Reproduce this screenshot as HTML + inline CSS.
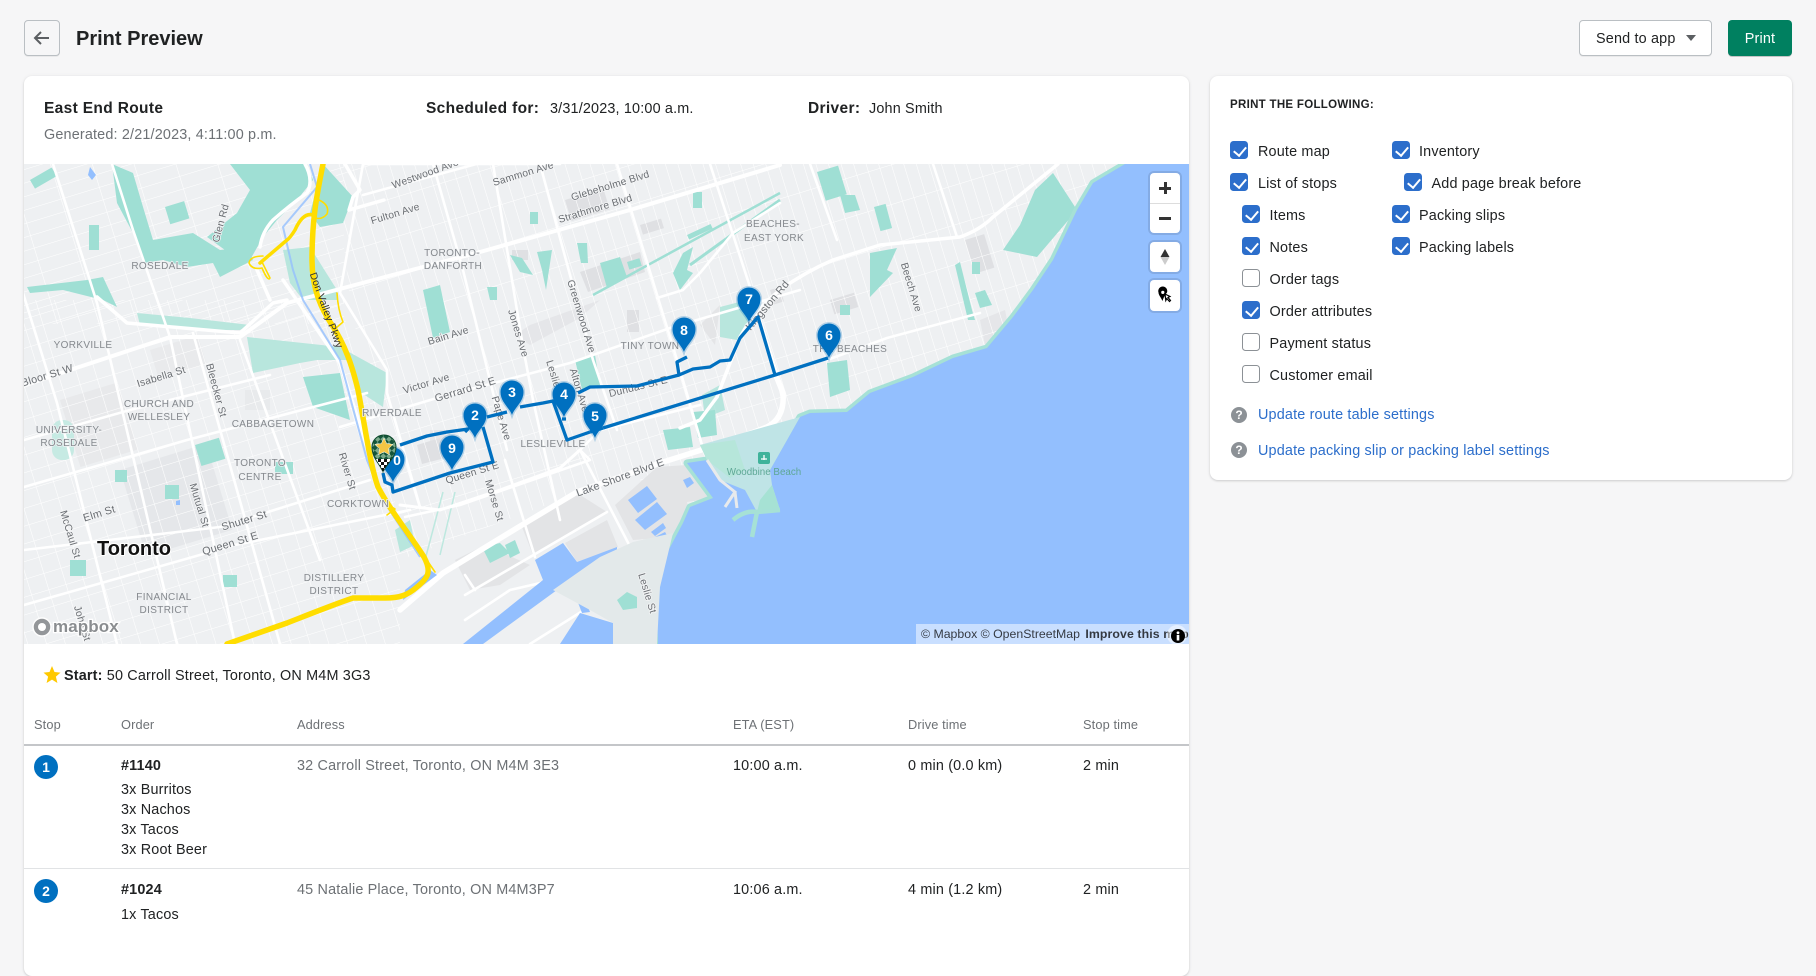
<!DOCTYPE html>
<html><head><meta charset="utf-8"><title>Print Preview</title>
<style>
*{box-sizing:border-box}
html,body{margin:0;padding:0;width:1816px;height:933px;overflow:hidden;background:#f6f6f7;font-family:"Liberation Sans",sans-serif;color:#202223}
.a{position:absolute;white-space:nowrap;line-height:20px;font-size:14.4px;letter-spacing:.17px}
.card{position:absolute;background:#fff;border-radius:8px;box-shadow:0 0 5px rgba(23,24,24,.05),0 1px 2px rgba(0,0,0,.15)}
.btn{position:absolute;border-radius:4px;background:#fff;border:1px solid #babfc3;box-shadow:0 1px 0 rgba(0,0,0,.05)}
.cb{position:absolute;width:18px;height:18px;border-radius:3.5px;background:#2c6ecb}
.cb:after{content:"";position:absolute;left:6px;top:3px;width:6px;height:10px;border:solid #fff;border-width:0 2px 2px 0;transform:rotate(40deg)}
.cb.o{background:#fff;border:1.6px solid #8c9196}
.cb.o:after{display:none}
.b{font-weight:bold}
.h{font-weight:bold;font-size:15.5px;letter-spacing:.34px}
.g{color:#6d7175}
.th{font-size:12.8px;color:#6d7175;letter-spacing:.12px}
.link{color:#2c6ecb}
.q{position:absolute;width:16px;height:16px;border-radius:50%;background:#8c9196;color:#fff;font:bold 12px/16px "Liberation Sans",sans-serif;text-align:center}
.badge{position:absolute;width:24px;height:24px;border-radius:50%;background:#0070c0;color:#fff;font:bold 14px/24px "Liberation Sans",sans-serif;text-align:center}
#map{position:absolute;left:24px;top:164px;width:1165px;height:480px;overflow:hidden}
.ctl{position:absolute;background:#fff;border-radius:4px;box-shadow:0 0 0 2px rgba(0,0,0,.1)}
svg text{font-family:"Liberation Sans",sans-serif}
.hood{font-size:10px;fill:#85898e;letter-spacing:.35px;text-anchor:middle;paint-order:stroke;stroke:#eef0f2;stroke-width:1.5px}
.rd{font-size:10.3px;fill:#6a6e73;text-anchor:middle;letter-spacing:.2px;paint-order:stroke;stroke:#f4f5f6;stroke-width:1.5px}
.rl{font-size:10.8px}
.pn{font-size:14px;font-weight:bold;fill:#fff;text-anchor:middle}
</style></head><body>

<div class="btn" style="left:24px;top:20px;width:36px;height:36px;background:#f6f6f7"></div>
<svg style="position:absolute;left:24px;top:20px" width="36" height="36" viewBox="0 0 36 36"><path d="M25 18H11M17 12l-6 6 6 6" fill="none" stroke="#5c5f62" stroke-width="2"/></svg>
<div class="a b" style="left:76px;top:27px;font-size:20px;line-height:24px;letter-spacing:0">Print Preview</div>

<div class="btn" style="left:1579px;top:20px;width:133px;height:36px"></div>
<div class="a" style="left:1596px;top:29px">Send to app</div>
<svg style="position:absolute;left:1685px;top:34px" width="12" height="8"><path d="M1 1h10L6 7z" fill="#5c5f62"/></svg>
<div style="position:absolute;left:1728px;top:20px;width:64px;height:36px;border-radius:4px;background:#008060;box-shadow:0 1px 0 rgba(0,0,0,.2)"></div>
<div class="a" style="left:1728px;top:29px;width:64px;text-align:center;color:#fff">Print</div>

<div class="card" style="left:24px;top:76px;width:1165px;height:900px"></div>
<div class="a h" style="left:44px;top:99px">East End Route</div>
<div class="a g" style="left:44px;top:125px">Generated: 2/21/2023, 4:11:00 p.m.</div>
<div class="a h" style="left:426px;top:99px">Scheduled for:</div>
<div class="a" style="left:550px;top:99px">3/31/2023, 10:00 a.m.</div>
<div class="a h" style="left:808px;top:99px">Driver:</div>
<div class="a" style="left:869px;top:99px">John Smith</div>

<div id="map">
<svg width="1165" height="480" viewBox="24 164 1165 480" xmlns="http://www.w3.org/2000/svg">
<defs>
<pattern id="pE" width="12" height="38" patternUnits="userSpaceOnUse" patternTransform="rotate(-17 0 0)"><path d="M0 0V38M0 0H12" stroke="#fff" stroke-width="1.1" fill="none"/></pattern>
<pattern id="pW" width="40" height="13" patternUnits="userSpaceOnUse" patternTransform="rotate(-17 0 0)"><path d="M0 0V13M0 0H40" stroke="#fff" stroke-width="1.1" fill="none"/></pattern>
<pattern id="pD" width="18" height="17" patternUnits="userSpaceOnUse" patternTransform="rotate(-17 0 0)"><path d="M0 0V17M0 0H18" stroke="#fff" stroke-width="1.1" fill="none"/></pattern>
<pattern id="chk" width="8" height="8" patternUnits="userSpaceOnUse" patternTransform="rotate(45 384 447)"><rect width="8" height="8" fill="#15553a"/><rect width="4" height="4" fill="#7aa98a"/><rect x="4" y="4" width="4" height="4" fill="#7aa98a"/></pattern>
<pattern id="chk2" width="6" height="6" patternUnits="userSpaceOnUse"><rect width="6" height="6" fill="#111"/><rect width="3" height="3" fill="#fff"/><rect x="3" y="3" width="3" height="3" fill="#fff"/></pattern>
<path id="pin" d="M0 0C-3-8-11.500-13-11.500-23A11.500 11.500 0 1 1 11.500-23C11.500-13 3-8 0 0Z"/>
</defs>
<rect x="24" y="164" width="1165" height="480" fill="#eef0f2"/>

<!-- gray blocks under the street grid -->
<g fill="#dfe0e3">
<polygon points="580,272 640,252 645,272 588,292"/>
<rect x="512" y="250" width="16" height="10"/>
<polygon points="515,335 530,325 600,300 580,318 530,345" opacity=".6"/>
<rect x="627" y="310" width="12" height="22"/>
<polygon points="417,445 440,438 445,458 422,464"/>
<polygon points="700,325 720,305 715,345" opacity=".7"/>
<rect x="120" y="470" width="90" height="90" transform="rotate(-17 120 470)" opacity=".55"/>
<rect x="60" y="400" width="60" height="70" transform="rotate(-17 60 400)" opacity=".45"/>
<rect x="150" y="350" width="50" height="30" transform="rotate(-17 150 350)" opacity=".35"/>
<rect x="245" y="390" width="25" height="20" opacity=".4"/>
<rect x="965" y="240" width="20" height="35" transform="rotate(-17 965 240)"/>
<rect x="830" y="300" width="25" height="15" transform="rotate(-17 830 300)"/>
<polygon points="980,320 1005,310 1010,335 985,345" opacity=".6"/>
<rect x="430" y="430" width="20" height="14" opacity=".6"/>
<rect x="565" y="200" width="40" height="22" transform="rotate(-17 565 200)"/>
<rect x="640" y="225" width="22" height="10" transform="rotate(-17 640 225)"/>
<rect x="770" y="290" width="10" height="15" transform="rotate(-17 770 290)"/>
</g>

<!-- street grids -->
<rect x="24" y="164" width="320" height="160" fill="url(#pW)"/>
<polygon points="24,300 340,300 400,520 400,644 24,644" fill="url(#pD)"/>
<polygon points="335,164 1189,164 1189,644 640,644 640,470 400,560 350,300" fill="url(#pE)"/>

<!-- port lands (no grid) -->
<g fill="#e3e4e6">
<polygon points="522,527 577,493 607,512 533,555"/>
<polygon points="565,543 607,520 618,547 577,562"/>
<polygon points="615,505 657,467 687,465 715,498 687,502 690,517 673,537 633,540"/>
<polygon points="455,560 485,545 530,565 500,585 470,590"/>
</g>

<!-- parks -->
<g fill="#9fdfd4">
<polygon points="112,164 133,173 143,207 153,240 193,233 220,250 247,247 253,260 220,277 213,263 187,267 163,260 143,263 133,233 117,203"/>
<polygon points="230,164 307,164 313,180 297,200 277,220 263,237 250,260 225,250 207,237 237,213 250,190"/>
<polygon points="323,164 353,197 343,223 320,227 310,213"/>
<polygon points="27,287 87,280 103,277 117,307 103,300 63,290 30,293"/>
<polygon points="303,377 340,373 350,420 313,407"/>
<polygon points="683,253 693,247 687,270 693,273 680,290 673,273"/>
<polygon points="1053,173 1077,210 1037,257 1003,250 1020,225 1035,190"/>
<polygon points="870,253 897,248 887,270 893,273 870,297"/>
<polygon points="827,363 847,360 850,390 830,397"/>
<polygon points="600,263 620,257 627,277 607,288"/>
<rect x="165" y="207" width="20" height="18" transform="rotate(-17 165 207)"/>
<rect x="89" y="225" width="10" height="25"/>
<rect x="30" y="180" width="25" height="10" transform="rotate(-30 30 180)"/>
<rect x="195" y="445" width="25" height="22" transform="rotate(-17 195 445)"/>
<rect x="275" y="462" width="18" height="12"/>
<rect x="165" y="485" width="14" height="14"/>
<rect x="115" y="470" width="12" height="12"/>
<rect x="70" y="560" width="16" height="16"/>
<rect x="223" y="575" width="14" height="12"/>
<rect x="840" y="305" width="10" height="10"/>
<rect x="817" y="172" width="22" height="30" transform="rotate(-17 817 172)"/>
<rect x="874" y="207" width="12" height="25" transform="rotate(-15 874 207)"/>
<rect x="972" y="262" width="8" height="12"/>
<rect x="627" y="262" width="13" height="8" transform="rotate(-17 627 262)"/>
<rect x="693" y="192" width="9" height="16"/>
<rect x="687" y="235" width="26" height="5" transform="rotate(-25 687 235)"/>
<polygon points="537,252 552,250 546,290 542,270"/>
<polygon points="510,255 522,258 533,275 520,272"/>
<polygon points="423,290 440,285 450,332 433,338"/>
<polygon points="577,243 587,243 588,263 581,263"/>
<polygon points="487,287 497,287 497,300 490,300"/>
<rect x="530" y="212" width="8" height="12"/>
<polygon points="575,360 595,355 600,385 582,390"/>
<polygon points="663,430 690,427 693,447 668,450"/>
<polygon points="693,412 715,410 717,435 698,438"/>
<polygon points="702,395 720,385 725,410 705,418" opacity=".7"/>
<polygon points="482,547 500,543 510,553 490,563"/>
<polygon points="505,545 515,540 520,553 510,558"/>
<polygon points="975,293 985,290 992,305 980,308"/>
<polygon points="955,265 960,262 972,310 975,320 968,320"/>
<polygon points="840,195 855,195 860,210 845,213"/>
</g>
<g fill="#b8e6dd">
<polygon points="720,307 747,300 757,320 737,340 720,337"/>
<polygon points="283,250 310,247 337,290 337,300 303,300 290,283"/>
<polygon points="247,337 340,347 387,373 383,407 357,390 347,360 317,360 300,363 253,373"/>
<polygon points="137,313 190,318 250,325 240,330 190,330 140,325"/>
<polygon points="395,530 410,520 415,545 400,552"/>
<rect x="52" y="420" width="22" height="40" rx="10" fill="#c6eae3"/>
</g>
<path d="M593 295L780 193" stroke="#9fdfd4" stroke-width="2.500"/>
<path d="M690 265L780 200" stroke="#9fdfd4" stroke-width="3"/>
<path d="M443 492L425 560M455 492L440 555" stroke="#bde8df" stroke-width="1.500" fill="none"/>

<!-- minor feature paths -->
<g fill="none" stroke="#fff" stroke-width="2.600" stroke-linecap="round" stroke-linejoin="round">
<path d="M53 164L97 303L177 644"/>
<path d="M23 293L57 403L117 644"/>
<path d="M112 164L133 230L170 337L235 644"/>
<path d="M193 333L280 644"/>
<path d="M240 340L320 560"/>
<path d="M24 487L187 440L367 393"/>
<path d="M24 550L220 527L370 480"/>
<path d="M24 605L235 545L410 510"/>
<path d="M24 440L130 410L270 375"/>
<path d="M363 164L340 293L387 370L387 393L420 507"/>
<path d="M433 164L463 270L507 450"/>
<path d="M493 164L523 347L533 400L560 520"/>
<path d="M540 164L593 360L617 430"/>
<path d="M617 164L677 360L702 445"/>
<path d="M710 164L750 287L777 373L783 403"/>
<path d="M810 164L837 240"/>
<path d="M933 164L957 237"/>
<path d="M340 427L437 398L570 363L673 327L800 290"/>
<path d="M657 298L683 290L700 273L733 233L780 203"/>
<path d="M405 517L460 505L590 460L580 450L600 430L700 405"/>
<path d="M827 360L887 338L980 313"/>
<path d="M365 164L560 164"/>
<path d="M363 195L480 163"/>
<path d="M580 450L637 560L653 607"/>
<path d="M505 460L535 557"/>
<path d="M465 595L607 512"/>
<path d="M465 620L510 590L640 560"/>
<path d="M640 560L590 585L600 600L530 644"/>
<path d="M465 575L475 590"/>
</g>
<!-- big roads -->
<g fill="none" stroke="#fff" stroke-linecap="round" stroke-linejoin="round">
<path stroke-width="4" d="M20 387L70 370L170 337L240 337L287 303L423 267L480 252L630 210L780 165"/>
<path stroke-width="3.500" d="M97 297L127 323L240 333L273 303L287 300"/>
<path stroke-width="3.500" d="M260 247Q262 232 273 220Q290 205 307 193Q314 180 305 164"/>
<path stroke-width="3.500" d="M257 270L270 300"/>
<path stroke-width="3.500" d="M283 280L340 363L367 447"/>
<path stroke-width="3.500" d="M345 164L360 190L353 197L349 210L384 200"/>
<path stroke-width="3.500" d="M717 397L740 337Q755 310 780 290Q805 272 833 260L880 245L960 237Q980 230 993 217L1058 164"/>
<path stroke-width="3.500" d="M717 397L700 420L680 428"/>
<path stroke-width="5.500" d="M400 610L443 573L517 528L577 492L660 463L733 440L767 427Q785 418 783 393L775 373"/>
<path stroke-width="3" d="M400 505L440 510L500 490L560 468L580 450"/>
</g>

<!-- water -->
<polygon points="1125,164 1093,183 1077,210 1053,260 1033,290 1013,317 987,348 953,358 913,377 870,393 847,412 810,413 800,417 787,440 770,470 745,489 738,484 720,478 707,460 687,463 713,498 690,507 683,523 667,553 660,587 657,610 658,644 1189,644 1189,164" fill="#93bffe" stroke="#a6e1d6" stroke-width="7" stroke-linejoin="round" paint-order="stroke"/>
<g fill="#93bffe">
<polygon points="463,644 543,580 535,560 563,543 577,562 617,547 617,555 557,590 483,644"/>
<polygon points="560,644 580,613 613,623 613,644"/>
<polygon points="628,500 647,486 657,499 638,513"/>
<polygon points="635,520 657,502 667,514 645,530"/>
<polygon points="651,532 663,523 666,528 655,536"/>
<polygon points="655,537 665,532 668,537 659,543"/>
<polygon points="683,480 690,477 694,483 687,488"/>
<polygon points="577,600 584,597 590,612 582,613"/>
<polygon points="403,600 437,575 430,570 405,590"/>
<polygon points="176,501 180,500 180,505 176,505"/>
<polygon points="90,167 96,175 92,180 88,175"/>
</g>
<!-- spit and beach -->
<polygon points="633,542 673,533 660,587 657,644 613,644 613,623 590,610 553,590 600,557" fill="#e3e9ea"/>
<polygon points="617,600 627,592 637,597 637,608 623,610" fill="#9fdfd4"/>
<polygon points="700,445 800,417 787,440 770,470 772,485 780,510 757,512 745,490 720,480 707,460" fill="#bfe4e6"/>
<polygon points="700,445 735,440 745,470 730,478 707,460" fill="#b6e6da"/>
<polygon points="760,500 772,485 780,510 757,512" fill="#a6e2d4"/>
<path d="M733 520Q745 510 757 512L780 510M757 512L752 537" fill="none" stroke="#a6e1d6" stroke-width="4.500" stroke-linejoin="round"/>
<path d="M707 460L720 480L735 492L725 507M735 492L737 508" fill="none" stroke="#e8eaec" stroke-width="3"/>
<rect x="758" y="452" width="12" height="12" rx="2" fill="#3fb39b"/>
<path d="M761 459h6M764 455v5" stroke="#fff" stroke-width="1.300"/>

<!-- don river -->
<path d="M310 164L317 187L283 227L293 270L303 300L340 360L367 460L383 500L420 557" fill="none" stroke="#93bffe" stroke-width="2" opacity=".8"/>

<!-- highway -->
<g fill="none" stroke="#ffdd00" stroke-linecap="round" stroke-linejoin="round">
<path stroke-width="5.500" d="M323 164C318 190 312 215 312 260C312 290 322 310 332 325C345 345 352 365 358 390C364 420 370 465 378 487C390 510 410 535 424 557C432 572 428 578 417 587C408 595 400 598 385 598L353 598C335 604 310 614 287 623L227 644"/>
<path stroke-width="3.500" d="M313 215Q303 212 295 230Q290 238 287 240L260 263"/>
<path stroke-width="1.600" d="M319 200Q330 205 327 214Q322 220 315 218M263 256Q250 256 249 263Q252 270 262 268M262 268Q268 282 270 278L262 262M337 293Q338 310 343 322L336 328M420 550L435 572M389 505L395 509L387 515"/>
</g>

<!-- labels -->
<g>
<text class="hood" x="160" y="269">ROSEDALE</text>
<text class="hood" x="83" y="348">YORKVILLE</text>
<text class="hood" x="159" y="407">CHURCH AND</text>
<text class="hood" x="159" y="420">WELLESLEY</text>
<text class="hood" x="273" y="427">CABBAGETOWN</text>
<text class="hood" x="69" y="433">UNIVERSITY-</text>
<text class="hood" x="69" y="446">ROSEDALE</text>
<text class="hood" x="260" y="466">TORONTO</text>
<text class="hood" x="260" y="480">CENTRE</text>
<text class="hood" x="392" y="416">RIVERDALE</text>
<text class="hood" x="452" y="256">TORONTO-</text>
<text class="hood" x="453" y="269">DANFORTH</text>
<text class="hood" x="358" y="507">CORKTOWN</text>
<text class="hood" x="334" y="581">DISTILLERY</text>
<text class="hood" x="334" y="594">DISTRICT</text>
<text class="hood" x="164" y="600">FINANCIAL</text>
<text class="hood" x="164" y="613">DISTRICT</text>
<text class="hood" x="773" y="227">BEACHES-</text>
<text class="hood" x="774" y="241">EAST YORK</text>
<text class="hood" x="650" y="349">TINY TOWN</text>
<text class="hood" x="553" y="447">LESLIEVILLE</text>
<text class="hood" x="850" y="352">THE BEACHES</text>
<text x="134" y="555" style="font-size:20px;font-weight:bold;fill:#111;text-anchor:middle;paint-order:stroke;stroke:#fff;stroke-width:2px">Toronto</text>
<text class="rd" transform="translate(220 223) rotate(-75)" y="4">Glen Rd</text>
<text class="rd" transform="translate(327 310) rotate(70)" y="4" style="fill:#333;stroke-width:0">Don Valley Pkwy</text>
<text class="rd" transform="translate(395 213) rotate(-17)" y="4">Fulton Ave</text>
<text class="rd" transform="translate(425 173) rotate(-20)" y="4">Westwood Ave</text>
<text class="rd" transform="translate(448 335) rotate(-17)" y="4">Bain Ave</text>
<text class="rd" transform="translate(426 383) rotate(-17)" y="4">Victor Ave</text>
<text class="rd rl" transform="translate(465 389) rotate(-17)" y="4">Gerrard St E</text>
<text class="rd rl" transform="translate(47 375) rotate(-17)" y="4">Bloor St W</text>
<text class="rd" transform="translate(161 376) rotate(-17)" y="4">Isabella St</text>
<text class="rd" transform="translate(217 390) rotate(75)" y="4">Bleecker St</text>
<text class="rd" transform="translate(200 505) rotate(73)" y="4">Mutual St</text>
<text class="rd" transform="translate(348 471) rotate(73)" y="4">River St</text>
<text class="rd" transform="translate(71 534) rotate(73)" y="4">McCaul St</text>
<text class="rd rl" transform="translate(99 513) rotate(-17)" y="4">Elm St</text>
<text class="rd rl" transform="translate(244 520) rotate(-17)" y="4">Shuter St</text>
<text class="rd rl" transform="translate(230 543) rotate(-17)" y="4">Queen St E</text>
<text class="rd" transform="translate(83 623) rotate(73)" y="4">John St</text>
<text class="rd" transform="translate(519 333) rotate(73)" y="4">Jones Ave</text>
<text class="rd" transform="translate(582 316) rotate(73)" y="4">Greenwood Ave</text>
<text class="rd" transform="translate(502 418) rotate(73)" y="4">Pape Ave</text>
<text class="rd" transform="translate(580 390) rotate(73)" y="4">Alton Ave</text>
<text class="rd" transform="translate(556 380) rotate(73)" y="4">Leslie St</text>
<text class="rd" transform="translate(638 386) rotate(-14)" y="4">Dundas St E</text>
<text class="rd rl" transform="translate(767 305) rotate(-50)" y="4">Kingston Rd</text>
<text class="rd" transform="translate(472 472) rotate(-17)" y="4">Queen St E</text>
<text class="rd" transform="translate(495 500) rotate(73)" y="4">Morse St</text>
<text class="rd rl" transform="translate(620 477) rotate(-20)" y="4">Lake Shore Blvd E</text>
<text class="rd" transform="translate(523 173) rotate(-17)" y="4">Sammon Ave</text>
<text class="rd" transform="translate(610 185) rotate(-17)" y="4">Glebeholme Blvd</text>
<text class="rd" transform="translate(595 208) rotate(-17)" y="4">Strathmore Blvd</text>
<text class="rd" transform="translate(912 287) rotate(73)" y="4">Beech Ave</text>
<text class="rd" transform="translate(648 593) rotate(73)" y="4">Leslie St</text>
<text x="764" y="475" style="font-size:9.8px;fill:#5da795;text-anchor:middle">Woodbine Beach</text>
</g>

<!-- mapbox logo -->
<circle cx="42" cy="627" r="9" fill="#8a8d90" stroke="#fff" stroke-width="1.500" opacity=".9"/>
<circle cx="42" cy="627" r="4" fill="#fff"/>
<text x="53" y="632" style="font-size:17px;font-weight:bold;fill:#8a8d90;paint-order:stroke;stroke:#fff;stroke-width:2.500px;letter-spacing:.1px">mapbox</text>

<!-- route -->
<g fill="none" stroke="#0070c0" stroke-width="3.300" stroke-linejoin="round">
<path d="M400 445L427 436L447 432L468 429L465 432"/>
<path d="M483 427L493 462L450 473L393 492L392 485L385 482L383 473"/>
<path d="M487 417L507 412M520 407L543 403L553 401L567 440L590 432M603 428L775 375L828 358"/>
<path d="M775 375L758 317L740 338L730 360L720 361L710 367L693 369L679 375L677 362L687 357"/>
<path d="M679 375L637 386L590 387L578 393"/>
<path d="M562 419H566M590 432L603 428"/>
</g>

<!-- pins -->
<g fill="#0070c0" stroke="rgba(0,112,192,.25)" stroke-width="3" paint-order="stroke">
<use href="#pin" x="393" y="482"/>
<use href="#pin" x="475" y="438"/>
<use href="#pin" x="512" y="415"/>
<use href="#pin" x="564" y="417"/>
<use href="#pin" x="595" y="438"/>
<use href="#pin" x="829" y="358"/>
<use href="#pin" x="749" y="322"/>
<use href="#pin" x="684" y="352"/>
<use href="#pin" x="452" y="470"/>
</g>
<text class="pn" x="397" y="465">0</text>
<text class="pn" x="475" y="420">2</text>
<text class="pn" x="512" y="397">3</text>
<text class="pn" x="564" y="399">4</text>
<text class="pn" x="595" y="421">5</text>
<text class="pn" x="829" y="340">6</text>
<text class="pn" x="749" y="304">7</text>
<text class="pn" x="684" y="335">8</text>
<text class="pn" x="452" y="453">9</text>

<!-- start marker -->
<path d="M383 472C380 464 372 458 372 447A12 12 0 1 1 396 447C396 458 386 464 383 472Z" fill="url(#chk)" stroke="#0e4a2c" stroke-width="1"/>
<path d="M383 472C381 466 378 463 376 459H391C389 463 385 466 383 472Z" fill="url(#chk2)"/>
<path d="M384 438l2.700 5.600 6.200.8-4.500 4.300 1.100 6.100-5.500-3-5.500 3 1.100-6.100-4.500-4.300 6.200-.8z" fill="#f5c644" stroke="#fff" stroke-width=".5"/>
</svg>

<!-- controls -->
<div class="ctl" style="left:1126px;top:9px;width:30px;height:60px"></div>
<div style="position:absolute;left:1126px;top:39px;width:30px;height:1px;background:#ddd"></div>
<div style="position:absolute;left:1135px;top:22.500px;width:12px;height:3px;background:#333"></div>
<div style="position:absolute;left:1139.500px;top:18px;width:3px;height:12px;background:#333"></div>
<div style="position:absolute;left:1135px;top:52.500px;width:12px;height:3px;background:#333"></div>
<div class="ctl" style="left:1126px;top:78px;width:30px;height:30px"></div>
<svg style="position:absolute;left:1126px;top:78px" width="30" height="30"><path d="M15 7l4.500 8h-9z" fill="#333"/><path d="M15 23l4.500-8h-9z" fill="#ccc"/></svg>
<div class="ctl" style="left:1126px;top:116px;width:30px;height:31px"></div>
<svg style="position:absolute;left:1126px;top:116px" width="30" height="31"><path d="M12.500 21C11 17.500 8.500 15 8.500 12.500A4.500 4.500 0 1 1 17 12.500C16 14 14 16 12.500 21Z" fill="#000"/><circle cx="12.800" cy="12.400" r="1.600" fill="#fff"/><path d="M15 14l5 2.500-2 1 2.500 3-1 1-2.700-3-1 2z" fill="#fff" stroke="#000" stroke-width="1.200"/></svg>

<!-- attribution -->
<div style="position:absolute;right:0;bottom:0;width:273px;height:20px;background:rgba(255,255,255,.5);overflow:hidden;white-space:nowrap;font-size:12.3px;line-height:20px;color:rgba(0,0,0,.75);padding-left:5px">© Mapbox © OpenStreetMap <b style="margin-left:2px;letter-spacing:.1px">Improve this map</b></div>
<div style="position:absolute;left:1143px;top:461px;width:20px;height:20px;border-radius:50%;background:rgba(255,255,255,.5)"></div>
<svg style="position:absolute;left:1146.700px;top:464.700px" width="14" height="14"><circle cx="7" cy="7" r="7" fill="#000"/><rect x="5.700" y="6" width="2.600" height="5.500" fill="#fff"/><circle cx="7" cy="3.800" r="1.400" fill="#fff"/></svg>
</div>

<svg style="position:absolute;left:43px;top:666px" width="18" height="18" viewBox="0 0 18 18"><path d="M9 0l2.500 6 6 .6-4.600 4 1.500 6.400L9 13.600 3.600 17l1.500-6.400-4.600-4 6-.6z" fill="#ffc900"/></svg>
<div class="a" style="left:64px;top:666px"><b>Start:</b> 50 Carroll Street, Toronto, ON M4M 3G3</div>

<div class="a th" style="left:34px;top:715px">Stop</div>
<div class="a th" style="left:121px;top:715px">Order</div>
<div class="a th" style="left:297px;top:715px">Address</div>
<div class="a th" style="left:733px;top:715px">ETA (EST)</div>
<div class="a th" style="left:908px;top:715px">Drive time</div>
<div class="a th" style="left:1083px;top:715px">Stop time</div>
<div style="position:absolute;left:24px;top:744px;width:1165px;height:1.500px;background:#c4c6c9"></div>
<div style="position:absolute;left:24px;top:868px;width:1165px;height:1px;background:#e1e3e5"></div>

<div class="badge" style="left:34px;top:755px">1</div>
<div class="a b" style="left:121px;top:756px">#1140</div>
<div class="a" style="left:121px;top:780px">3x Burritos</div>
<div class="a" style="left:121px;top:800px">3x Nachos</div>
<div class="a" style="left:121px;top:820px">3x Tacos</div>
<div class="a" style="left:121px;top:840px">3x Root Beer</div>
<div class="a g" style="left:297px;top:756px">32 Carroll Street, Toronto, ON M4M 3E3</div>
<div class="a" style="left:733px;top:756px">10:00 a.m.</div>
<div class="a" style="left:908px;top:756px">0 min (0.0 km)</div>
<div class="a" style="left:1083px;top:756px">2 min</div>

<div class="badge" style="left:34px;top:879px">2</div>
<div class="a b" style="left:121px;top:880px">#1024</div>
<div class="a" style="left:121px;top:905px">1x Tacos</div>
<div class="a g" style="left:297px;top:880px">45 Natalie Place, Toronto, ON M4M3P7</div>
<div class="a" style="left:733px;top:880px">10:06 a.m.</div>
<div class="a" style="left:908px;top:880px">4 min (1.2 km)</div>
<div class="a" style="left:1083px;top:880px">2 min</div>

<div class="card" style="left:1210px;top:76px;width:582px;height:404px"></div>
<div class="a b" style="left:1230px;top:95px;font-size:11.5px;letter-spacing:.3px">PRINT THE FOLLOWING:</div>

<div class="cb" style="left:1230px;top:141px"></div><div class="a" style="left:1258px;top:142px">Route map</div>
<div class="cb" style="left:1230px;top:173px"></div><div class="a" style="left:1258px;top:174px">List of stops</div>
<div class="cb" style="left:1242px;top:205px"></div><div class="a" style="left:1269.500px;top:206px">Items</div>
<div class="cb" style="left:1242px;top:237px"></div><div class="a" style="left:1269.500px;top:238px">Notes</div>
<div class="cb o" style="left:1242px;top:269px"></div><div class="a" style="left:1269.500px;top:270px">Order tags</div>
<div class="cb" style="left:1242px;top:301px"></div><div class="a" style="left:1269.500px;top:302px">Order attributes</div>
<div class="cb o" style="left:1242px;top:333px"></div><div class="a" style="left:1269.500px;top:334px">Payment status</div>
<div class="cb o" style="left:1242px;top:365px"></div><div class="a" style="left:1269.500px;top:366px">Customer email</div>

<div class="cb" style="left:1392px;top:141px"></div><div class="a" style="left:1419px;top:142px">Inventory</div>
<div class="cb" style="left:1404px;top:173px"></div><div class="a" style="left:1431.500px;top:174px">Add page break before</div>
<div class="cb" style="left:1392px;top:205px"></div><div class="a" style="left:1419px;top:206px">Packing slips</div>
<div class="cb" style="left:1392px;top:237px"></div><div class="a" style="left:1419px;top:238px">Packing labels</div>

<div class="q" style="left:1231px;top:407px">?</div>
<div class="a link" style="left:1258px;top:405px">Update route table settings</div>
<div class="q" style="left:1231px;top:442px">?</div>
<div class="a link" style="left:1258px;top:441px">Update packing slip or packing label settings</div>
</body></html>
